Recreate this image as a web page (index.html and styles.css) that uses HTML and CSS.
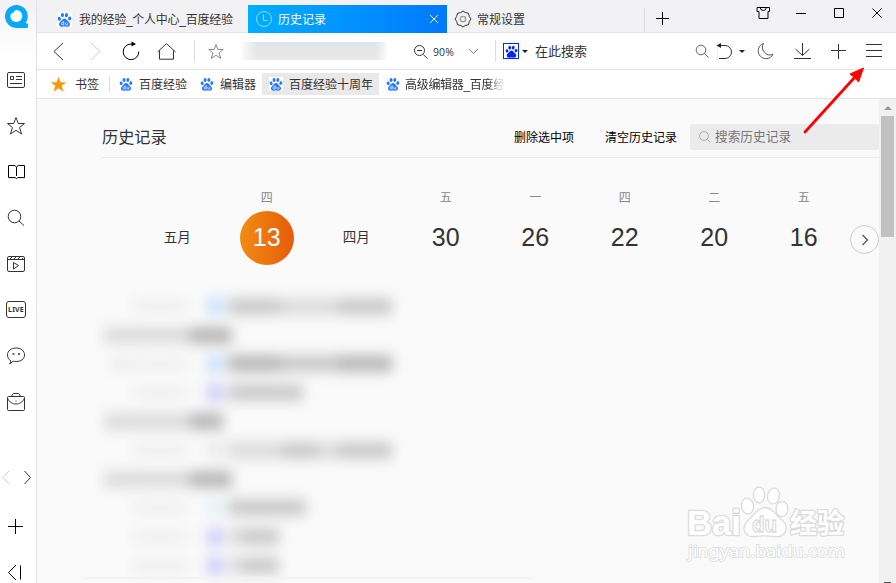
FILE: index.html
```html
<!DOCTYPE html>
<html lang="zh-CN">
<head>
<meta charset="utf-8">
<title>历史记录</title>
<link rel="stylesheet" href="styles.css">
</head>
<body>
<svg class="defs" aria-hidden="true">
  <symbol id="paw" viewBox="0 0 16 16">
    <ellipse cx="2.500" cy="7.200" rx="1.700" ry="2.100" transform="rotate(-15 2.500 7.200)"/>
    <ellipse cx="5.800" cy="3.300" rx="1.700" ry="2.300"/>
    <ellipse cx="10.100" cy="3.300" rx="1.700" ry="2.300" transform="rotate(10 10.100 3.300)"/>
    <ellipse cx="13.500" cy="6.900" rx="1.700" ry="2.100" transform="rotate(15 13.500 6.900)"/>
    <path d="M8 6.800c1.700 0 2.400 1.600 3.600 2.800 1.200 1.100 2.400 2 2.200 3.600-.2 2-2 2.600-3.600 2.400-1.500-.2-2.900-.2-4.400 0-1.600.2-3.400-.4-3.600-2.400-.2-1.600 1-2.500 2.200-3.600C5.600 8.400 6.300 6.800 8 6.800z"/>
  </symbol>
  <symbol id="paw-du" viewBox="0 0 16 16">
    <use href="#paw"/>
    <path d="M7.100 9.500v4.300M7.100 11.300H5.600q-1 0-1 1.200t1 1.200h1.500M9 11.200v1.700q0 .9.900.9h1.400v-2.600" fill="none" stroke="#fff" stroke-width=".8"/>
  </symbol>
</svg>
<div class="app">
  <aside class="sidebar">
    <div class="logo"><svg width="26" height="26" viewBox="0 0 26 26"><path d="M13.500 2C7 2 2 7 2 13.200S7 24.900 13.500 24.900h10.700q.8 0 .8-.8V20.500q-1.200.3-2.200-.6 2-2.700 2-6.700C24.800 7 20 2 13.500 2z" fill="#08a9fb"/><circle cx="13.300" cy="13" r="6" fill="#fff"/><path d="M7 12.500q0-6 6.500-5.800-2.500.8-2.800 2.800Q8 10 7 12.500z" fill="#08a9fb"/></svg></div>
    <nav class="side-nav">
      <svg viewBox="0 0 20 20"><rect x="1.500" y="2.500" width="17" height="15" rx="1.500"/><path d="M4.500 6.500h3v3h-3zM10 6.500h6M10 9.500h6M4 13.500h12"/></svg>
      <svg viewBox="0 0 20 20"><path d="M10 1.500l2.300 6h6.200l-4.900 4 1.900 6.500-5.500-3.700L4.500 18l1.900-6.500-4.900-4h6.200z"/></svg>
      <svg viewBox="0 0 20 20" class="black"><path d="M2.500 3.500h6.200L10.500 5l1.800-1.500h6.200v12.100h-6.700l-1.300 1-1.300-1H2.500zM10.500 5v9"/></svg>
      <svg viewBox="0 0 20 20"><circle cx="8.500" cy="8.500" r="6.300"/><path d="M13 13l5 4.500"/></svg>
      <svg viewBox="0 0 20 20"><rect x="1.500" y="2.500" width="17" height="15" rx="1.500"/><path d="M1.500 5.500h17M4 5l2-2M8 5l2-2M12 5l2-2M16 5l1-1M7.500 8.500l5 3-5 3.500z"/></svg>
      <div class="live">LIVE</div>
      <svg viewBox="0 0 20 20"><path d="M5 15C2.700 13.500 1.500 11.500 1.500 9c0-4 3.500-7 8.700-7s8.300 3 8.300 7-3.500 6.500-8.300 6.500c-1.200 0-2.200-.2-3-.4L3.700 18z"/><path d="M6.500 8h2M12 8h2" stroke-width="1.600"/></svg>
      <svg viewBox="0 0 20 20"><rect x="1.500" y="4.500" width="17" height="14" rx="1"/><path d="M6 4.500V3l1.500-1.500h5L14 3v1.500M1.500 6c2 4.500 5 6 8.500 6s6.500-1.500 8.500-6M9.500 9h1"/></svg>
    </nav>
    <div class="side-bottom">
      <svg width="34" height="20" viewBox="0 0 34 20"><path d="M9 4L3 10.500 9 17" stroke="#ccc"/><path d="M24.500 4l6 6.500-6 6.500"/></svg>
      <svg class="side-plus black" width="20" height="20" viewBox="0 0 20 20"><path d="M10.500 3v15M3 10.500h15"/></svg>
      <svg class="side-collapse black" width="20" height="20" viewBox="0 0 20 20"><path d="M12 3L4.500 10.500l7.500 7.500M16.500 3.500v14"/></svg>
    </div>
  </aside>
  <div class="main">
    <header class="tabbar">
      <div class="tab first"><svg class="paw" viewBox="0 0 16 16"><use href="#paw-du"/></svg><span>我的经验_个人中心_百度经验</span></div>
      <div class="tab active"><svg width="18" height="18" viewBox="0 0 18 18"><circle cx="9" cy="9" r="7.500"/><path d="M8.500 4.500v6h4"/></svg><span>历史记录</span><svg class="close" width="10" height="10" viewBox="0 0 10 10"><path d="M1 1l8 8M9 1L1 9"/></svg></div>
      <div class="tab settings"><svg width="18" height="18" viewBox="0 0 18 18"><path d="M9 1l2.200 1.500 3.300.8.800 3.200L17 9l-1.700 2.500-.8 3.200-3.300.8L9 17l-2.200-1.500-3.300-.8-.8-3.200L1 9l1.700-2.500.8-3.200 3.300-.8z"/><circle cx="9" cy="9" r="2.700" stroke="#999" stroke-width="1.300"/></svg><span>常规设置</span></div>
      <svg class="new-tab black" width="16" height="16" viewBox="0 0 16 16"><path d="M8.500 2v13M2 8.500h13"/></svg>
      <div class="window-controls">
        <svg viewBox="0 0 16 16"><path d="M5 2.500H2v4h2v7h9v-7h1.500v-4h-3q-.5 3-3.200 3T5 2.500z"/><path d="M5 2.500h6.500"/></svg>
        <svg viewBox="0 0 16 16"><path d="M3 8.500h10"/></svg>
        <svg viewBox="0 0 16 16"><path d="M3.500 3.500h9v9h-9z"/></svg>
        <svg viewBox="0 0 16 16"><path d="M3.500 3.500l9 9M12.500 3.500l-9 9"/></svg>
      </div>
    </header>
    <div class="toolbar">
      <svg viewBox="0 0 20 20"><path d="M14 2L5 10.500l9 8.500"/></svg>
      <svg viewBox="0 0 20 20"><path d="M5 2l9 8.500L5 19" stroke="#ccc"/></svg>
      <svg viewBox="0 0 20 20" class="black"><path d="M12 3H10a7.800 7.800 0 1 0 7.800 7.500"/><path d="M10.500.5v5l4.500-2.500z" fill="#000" stroke="none"/></svg>
      <svg viewBox="0 0 20 20"><path d="M.5 11L9.500 2.500l9 8.500M2.500 9.500v8.700h14V9.500"/></svg>
      <i class="sep"></i>
      <svg viewBox="0 0 20 20"><path d="M10 3.500l1.900 5h5.300l-4.100 3.400 1.600 5.400-4.700-3-4.700 3 1.600-5.400-4.100-3.400h5.300z" stroke="#888"/></svg>
      <div class="address"></div>
      <svg viewBox="0 0 20 20"><circle cx="9.500" cy="9.500" r="5"/><path d="M7 9.500h5M13.300 13.500l4 4"/></svg>
      <span class="zoom">90%</span>
      <svg viewBox="0 0 20 20"><path d="M5 8l4.500 4.500L14 8" stroke="#888"/></svg>
      <i class="sep"></i>
      <div class="engine"><svg width="13" height="13"><use href="#paw"/></svg></div>
      <i class="caret"></i>
      <span class="search-text">在此搜索</span>
      <svg viewBox="0 0 20 20"><circle cx="9" cy="9" r="4.800" stroke="#666"/><path d="M12.500 12.500l4 4" stroke="#666"/></svg>
      <div class="undo"><svg viewBox="0 0 20 20"><path d="M3 4.500h7a6.500 6.500 0 0 1 0 13H4"/><path d="M1.500 4.500L6 2v5z" fill="#222" stroke="none"/></svg></div>
      <i class="caret"></i>
      <svg viewBox="0 0 20 20"><path d="M7.500 2.500A7.800 7.800 0 1 0 17 13.300 7.600 7.600 0 0 1 7.500 2.500z" stroke="#555"/></svg>
      <svg viewBox="0 0 20 20"><path d="M9.500 2v12.500M2.500 8l7 6.500 7-6.500M1 17.500h17"/></svg>
      <svg viewBox="0 0 20 20"><path d="M9.500 3v15M2 9.500h15"/></svg>
      <svg viewBox="0 0 20 20"><path d="M2 3.500h16M2 9.500h16M2 15.500h16"/></svg>
    </div>
    <div class="bookmarks">
      <div class="mark fav"><svg width="17" height="17" viewBox="0 0 17 17"><path d="M8.500.7l2 5.500h5.900l-4.700 3.600 1.800 6-5-3.500-5 3.500 1.800-6L.6 6.200h5.900z" fill="#ff960a"/></svg><span>书签</span></div>
      <i class="sep"></i>
      <div class="mark one"><svg class="paw"><use href="#paw-du"/></svg><span>百度经验</span></div>
      <div class="mark two"><svg class="paw"><use href="#paw-du"/></svg><span>编辑器</span></div>
      <div class="mark hover"><svg class="paw"><use href="#paw-du"/></svg><span>百度经验十周年</span></div>
      <div class="mark last"><svg class="paw"><use href="#paw-du"/></svg><span>高级编辑器_百度经</span></div>
    </div>
    <div class="viewport">
      <main class="page">
        <div class="heading">
          <h1>历史记录</h1>
          <a class="delete">删除选中项</a>
          <a class="clear">清空历史记录</a>
          <div class="search"><svg width="14" height="14" viewBox="0 0 14 14"><circle cx="6" cy="6" r="4.400"/><path d="M9.300 9.300l3 3"/></svg><span>搜索历史记录</span></div>
        </div>
        <div class="dates">
          <div class="day month"><small></small><b>五月</b></div>
          <div class="day selected"><small>四</small><b>13</b></div>
          <div class="day month"><small></small><b>四月</b></div>
          <div class="day"><small>五</small><b>30</b></div>
          <div class="day"><small>一</small><b>26</b></div>
          <div class="day"><small>四</small><b>22</b></div>
          <div class="day"><small>二</small><b>20</b></div>
          <div class="day"><small>五</small><b>16</b></div>
          <div class="next"><svg width="12" height="14" viewBox="0 0 12 14"><path d="M3.500 2l5 5-5 5"/></svg></div>
        </div>
        <div class="history">
          <div class="row"><i class="time"></i><i class="site sky"></i><i class="title" style="width:52px"></i><i class="title soft" style="width:58px"></i><i class="title" style="width:54px"></i></div>
          <div class="row group"><i class="title soft" style="width:86px"></i><i class="title dark" style="width:42px"></i></div>
          <div class="row marked"><i class="time"></i><i class="site sky"></i><i class="title dark" style="width:52px"></i><i class="title" style="width:58px"></i><i class="title dark" style="width:54px"></i></div>
          <div class="row"><i class="time"></i><i class="site violet"></i><i class="title" style="width:75px"></i></div>
          <div class="row group"><i class="title soft" style="width:86px"></i><i class="title dark" style="width:33px"></i></div>
          <div class="row"><i class="time"></i><i class="site plain"></i><i class="title soft" style="width:54px"></i><i class="title" style="width:36px"></i><i class="title soft" style="width:20px"></i><i class="title" style="width:54px"></i></div>
          <div class="row group"><i class="title soft" style="width:86px"></i><i class="title dark" style="width:42px"></i></div>
          <div class="row"><i class="time"></i><i class="site pale"></i><i class="title" style="width:78px"></i></div>
          <div class="row"><i class="time"></i><i class="site violet"></i><i class="title soft" style="width:14px"></i><i class="title" style="width:37px"></i></div>
          <div class="row"><i class="time"></i><i class="site violet"></i><i class="title soft" style="width:14px"></i><i class="title" style="width:37px"></i></div>
        </div>
      </main>
      <div class="scrollbar"><i class="up"></i><i class="thumb"></i><i class="down"></i></div>
    </div>
  </div>
  <i class="blue-line"></i>
  <svg class="watermark" width="170" height="86" viewBox="0 0 170 86">
    <g fill="#fff" stroke="#dcdcdc" stroke-width="1.300">
      <ellipse cx="63.500" cy="26" rx="6" ry="8" transform="rotate(-8 63.500 26)"/><ellipse cx="75" cy="15" rx="5.700" ry="8"/><ellipse cx="89.500" cy="16" rx="6" ry="8" transform="rotate(12 89.500 16)"/><ellipse cx="98" cy="29" rx="6" ry="7.500"/>
      <path d="M81 27.500c7 0 10 6 14 10 5 4 8 7 7 12-1 6-6 8-12 7-6-.8-12-.8-18 0-6 .8-11-1-12-7-.6-5 3-8 7-12 4-4 7-10 14-10z"/>
      <g paint-order="stroke" stroke-width="2.600" stroke-linejoin="round"><text x="3" y="55" class="wm-latin" textLength="54" lengthAdjust="spacingAndGlyphs">Bai</text><text x="106" y="53" class="wm-cjk" textLength="54">经验</text></g>
      <text x="68" y="52" class="wm-du" textLength="25" lengthAdjust="spacingAndGlyphs">du</text>
      <text x="4" y="77" class="wm-url" paint-order="stroke" stroke-width="1.600" textLength="157" lengthAdjust="spacingAndGlyphs">jingyan.baidu.com</text>
    </g>
  </svg>
  <svg class="arrow" width="70" height="74" viewBox="0 0 70 74"><path d="M8 71L58 16" stroke="#f00" stroke-width="2.800" stroke-linecap="round"/><path d="M66.500 7L61.500 21 58 17 53 13z" fill="#f00" stroke="#f00"/></svg>
</div>
</body>
</html>
```
FILE: styles.css
```css
* { box-sizing: border-box; }
body { margin: 0; overflow: hidden; font: 12px/18px "Liberation Sans", "Noto Sans CJK SC", sans-serif; color: #333; }
svg { display: block; fill: none; stroke: #333; stroke-width: 1; flex: none; }
svg.black { stroke: #000; }
i { display: block; }
.defs { position: absolute; width: 0; height: 0; }
.app { position: relative; display: flex; width: 896px; height: 583px; overflow: hidden; background: #fff; }

.sidebar { width: 37px; flex: none; border-right: 1px solid #e1e1e3; background: linear-gradient(#f2f2f5, #fff 56px) no-repeat; }
.logo { height: 57px; padding: 3px 0 0 3px; }
.logo svg { stroke: none; }
.side-nav { height: 368px; display: flex; flex-direction: column; padding-left: 6px; }
.side-nav > * { width: 20px; height: 20px; margin: 13px 0; flex: none; }
.side-nav .live { height: 17px; margin: 14px 0 15px; border: 1px solid #333; border-radius: 3px; font: bold 7px/15px "Noto Sans", sans-serif; text-align: center; letter-spacing: .2px; }
.side-bottom { padding-top: 42px; }
.side-plus { margin: 29px 0 0 5px; }
.side-collapse { margin: 26px 0 0 4px; }

.main { flex: 1; min-width: 0; display: flex; flex-direction: column; }
.tabbar { height: 33px; flex: none; display: flex; background: #f2f2f5; border-bottom: 1px solid #e3e3e5; }
.tab { display: flex; align-items: center; height: 28px; margin-top: 5px; white-space: nowrap; }
.tab span { padding-top: 2px; }
.paw { width: 14px; height: 14px; fill: #2878ff; stroke: none; background: #fff; }
.first { width: 211px; padding-left: 20px; gap: 7px; letter-spacing: -.26px; }
.first .paw { width: 15px; height: 15px; }
.active { width: 199px; padding-left: 7px; gap: 5px; color: #fff; background: linear-gradient(90deg, #00aeff, #0078ff); }
.active svg { stroke: #8cdcff; }
.active .close { margin: 0 8px 0 auto; stroke: #fff; }
.settings { width: 198px; height: 24px; margin-top: 8px; padding: 0 0 2px 7px; gap: 5px; border-right: 1px solid #ddd; }
.new-tab { margin: 10px 0 0 9px; }
.window-controls { margin: 5px 11px 0 auto; display: flex; gap: 22px; }
.window-controls svg { width: 16px; height: 16px; stroke: #000; }

.toolbar { height: 37px; flex: none; display: grid; align-items: center; padding-left: 12px; border-bottom: 1px solid #e3e3e5; background: #fff; grid-template-columns: 37px 35px 36px 37px 12px 36px 168px 23px 31px 31px 8px 19px 13px 157px 23px 24px 17px 37px 36px 35px 32px; }
.toolbar svg { width: 20px; height: 20px; }
.sep { width: 1px; height: 22px; background: #ddd; }
.address { width: 145px; height: 18px; background: linear-gradient(90deg, #fffc, #fff0 10%, #fff0 92%, #fffc), linear-gradient(#dce6eb, #e6e6e8 50%, #e9e9ea); }
.zoom { padding-top: 1px; font: 10.500px/18px "Open Sans", sans-serif; letter-spacing: .1px; white-space: nowrap; }
.toolbar .engine { width: 16px; height: 16px; border: 1px solid #0028ff; display: grid; place-items: center; }
.toolbar .engine svg { width: 13px; height: 13px; fill: #0028ff; stroke: none; }
.caret { width: 0; border: 3px solid transparent; border-top-color: #222; border-bottom: 0; }
.search-text { padding-top: 1px; font-size: 13px; white-space: nowrap; }
.undo { border-left: 1px solid #eee; margin-left: 2px; }
.undo svg { margin-left: -3px; }

.bookmarks { height: 29px; flex: none; display: flex; align-items: center; border-bottom: 1px solid #e3e3e5; background: #fff; }
.mark { display: flex; align-items: center; gap: 6px; height: 22px; white-space: nowrap; }
.mark span { padding-top: 2px; }
.fav { width: 72px; padding-left: 13px; gap: 8px; }
.fav svg { stroke: none; }
.one { width: 90px; padding-left: 9px; }
.two { width: 62px; }
.hover { width: 117px; padding-left: 7px; background: #e9e9e9; }
.last { padding-left: 7px; gap: 5px; }
.last span { letter-spacing: -.3px; -webkit-mask-image: linear-gradient(90deg, #000 82%, transparent); mask-image: linear-gradient(90deg, #000 82%, transparent); }
.bookmarks .sep { height: 16px; }

.viewport { flex: 1; min-height: 0; display: flex; }
.page { width: 842px; flex: none; padding-left: 65px; background: #fafafa; overflow: hidden; }
.heading { height: 59px; display: flex; align-items: flex-start; padding-top: 18px; border-bottom: 1px solid #ececec; }
h1 { width: 412px; margin: 8px 0 0; font-size: 16.200px; line-height: 24px; font-weight: 400; }
.delete, .clear { margin-top: 12px; color: #000; }
.delete { width: 91px; }
.clear { width: 85px; }
.search { flex: 1; height: 26px; margin-top: 7px; padding-left: 8px; display: flex; align-items: center; gap: 3px; border-radius: 3px; background: #ebebeb; color: #777; font-size: 12.700px; }
.search svg { stroke: #aaa; }
.dates { height: 134px; display: flex; padding: 30px 0 0 30.500px; }
.day { width: 89.500px; flex: none; text-align: center; }
.day small { display: block; height: 23px; padding-top: 1px; font-size: 12px; line-height: 19px; color: #888; }
.day b { display: block; width: 54px; height: 54px; margin: 0 auto; font-size: 25px; line-height: 53px; font-weight: 400; }
.month b { font-size: 13.500px; }
.selected b { color: #fff; border-radius: 50%; background: linear-gradient(90deg, #f18d12, #e65b0b); }
.next { width: 29px; height: 29px; margin: 37px 0 0 1.500px; flex: none; border: 1px solid #ccc; border-radius: 50%; display: grid; place-items: center; }
.next svg { stroke: #666; stroke-width: 1.500; }
.history { filter: blur(6.500px); margin-left: 2px; }
.row { height: 28.800px; display: flex; align-items: center; padding-left: 29px; }
.row.group { padding-left: 0; }
.row.marked { padding-left: 8px; }
.row.marked::before { content: ""; width: 17px; height: 12px; margin-right: 4px; background: #e8e8e8; }
.time { width: 54px; height: 12px; margin-right: 20px; background: #eee; }
.site { width: 16px; height: 18px; margin-right: 5px; }
.sky { background: #c8e0ff; }
.violet { background: #cfcbf8; }
.plain { background: #eaeaea; }
.pale { background: #e5f1f8; }
.title { height: 17px; background: #cacaca; }
.soft { background: #dcdcdc; }
.dark { background: #b8b8b8; }
.scrollbar { width: 17px; background: #f0f0f0; display: flex; flex-direction: column; align-items: center; }
.up { width: 0; margin-top: 7px; border: 4px solid transparent; border-bottom-color: #999; border-top: 0; }
.thumb { width: 13px; height: 121px; margin: 6px 0 0; background: #c1c1c1; }
.down { width: 7px; height: 1px; margin-top: auto; background: #555; }
.blue-line { position: absolute; left: 84px; top: 577px; width: 448px; height: 2px; background: #edf4f8; }
.watermark { position: absolute; left: 684px; top: 480px; }
.wm-latin { font: bold 35px "Liberation Sans", sans-serif; }
.wm-cjk { font: bold 27px "Noto Sans CJK SC", sans-serif; }
.wm-du { font: bold 22px "Liberation Sans", sans-serif; }
.wm-url { font: 17px "Noto Sans", sans-serif; }
.arrow { position: absolute; left: 797px; top: 61px; }
```
